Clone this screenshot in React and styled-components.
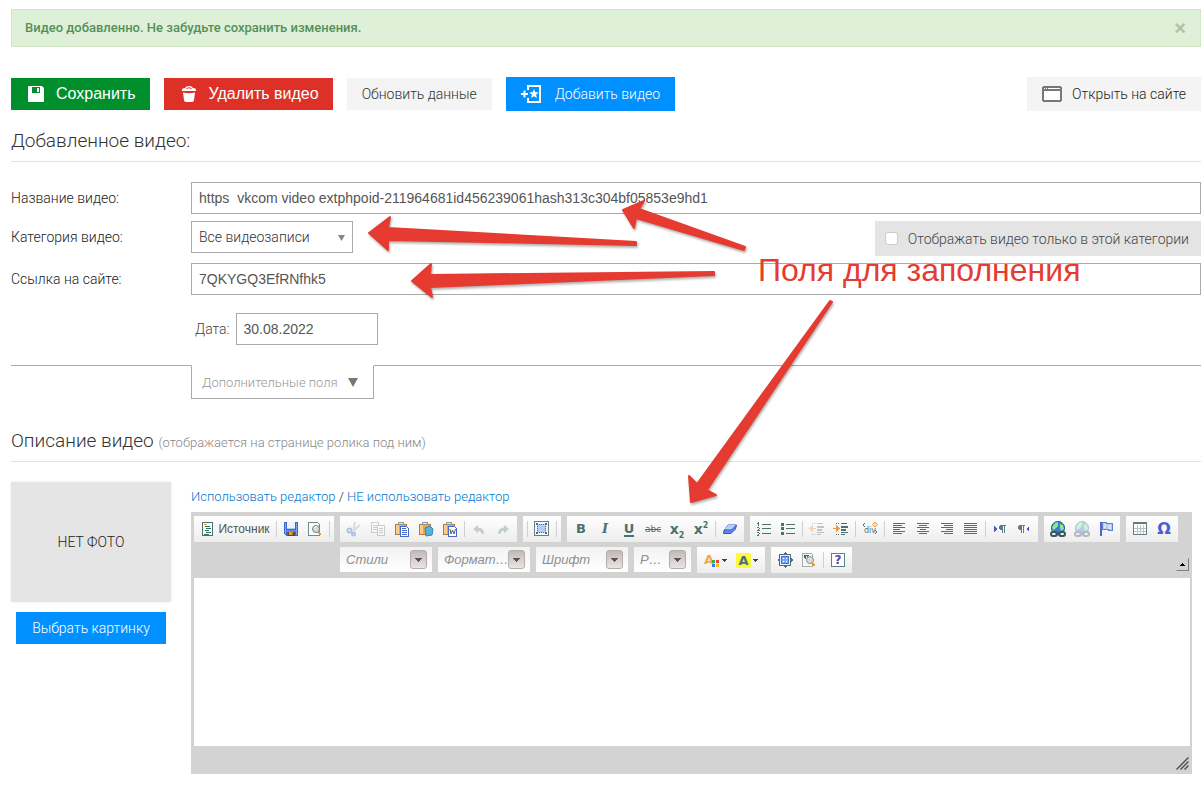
import React from 'react';
import styled, { createGlobalStyle } from 'styled-components';

const teal = '#4d7170';
const blue = '#4a6fd8';

function App() {
  return (
    <>
      <GlobalStyle />
      <Page>
        <Alert role="status">
          <AlertText>Видео добавленно. Не забудьте сохранить изменения.</AlertText>
          <CloseButton type="button" aria-label="Закрыть">×</CloseButton>
        </Alert>

        <Actions>
          <ActionButton type="button" $bg="#008f2c" $color="#fff" $plain>
            <SaveIcon />
            Сохранить
          </ActionButton>
          <ActionButton type="button" $bg="#dd3127" $color="#fff" $plain>
            <TrashIcon />
            Удалить видео
          </ActionButton>
          <ActionButton type="button" $bg="#f4f4f4" $color="#333">
            Обновить данные
          </ActionButton>
          <ActionButton type="button" $bg="#0090ff" $color="#fff" $tall $gap={14}>
            <AddVideoIcon />
            Добавить видео
          </ActionButton>
          <Spacer />
          <ActionButton type="button" $bg="#f4f4f4" $color="#222" $tall>
            <WindowIcon />
            Открыть на сайте
          </ActionButton>
        </Actions>

        <SectionTitle $top={10}>Добавленное видео:</SectionTitle>

        <Form>
          <Label htmlFor="title">Название видео:</Label>
          <TextInput
            id="title"
            defaultValue="https  vkcom video extphpoid-211964681id456239061hash313c304bf05853e9hd1"
          />

          <Label htmlFor="category">Категория видео:</Label>
          <CategoryRow>
            <SelectBox>
              <CategorySelect id="category">
                <option>Все видеозаписи</option>
              </CategorySelect>
              <SelectArrow viewBox="0 0 7 6"><path d="M0 0h7L3.5 6z" fill="#888" /></SelectArrow>
            </SelectBox>
            <OnlyHere>
              <Checkbox type="checkbox" />
              Отображать видео только в этой категории
            </OnlyHere>
          </CategoryRow>

          <Label htmlFor="link">Ссылка на сайте:</Label>
          <TextInput id="link" defaultValue="7QKYGQ3EfRNfhk5" />
        </Form>

        <DateRow>
          <DateLabel htmlFor="date">Дата:</DateLabel>
          <DateInput id="date" defaultValue="30.08.2022" />
        </DateRow>

        <Extra>
          <ExtraTab type="button">
            Дополнительные поля
            <svg width="10" height="9" viewBox="0 0 10 9"><path d="M0 0h10L5 9z" fill="#777" /></svg>
          </ExtraTab>
        </Extra>

        <SectionTitle $top={22}>
          Описание видео <Hint>(отображается на странице ролика под ним)</Hint>
        </SectionTitle>

        <Description>
          <PhotoColumn>
            <Photo>НЕТ ФОТО</Photo>
            <PickButton type="button">Выбрать картинку</PickButton>
          </PhotoColumn>
          <EditorColumn>
            <Modes>
              <a href="#on">Использовать редактор</a> / <a href="#off">НЕ использовать редактор</a>
            </Modes>
            <Editor />
          </EditorColumn>
        </Description>

        <Notes />
      </Page>
    </>
  );
}

export default App;

function Editor() {
  return (
    <EditorFrame>
      <Toolbar>
        <Group>
          <SourceButton type="button">
            <SourceIcon />
            Источник
          </SourceButton>
          <Separator />
          <Tool label="Сохранить"><DiskIcon /></Tool>
          <Tool label="Предварительный просмотр"><PreviewIcon /></Tool>
          <Separator />
        </Group>

        <ToolRows>
          <ToolRow>
            <Group>
              <Tool label="Вырезать" off><CutIcon /></Tool>
              <Tool label="Копировать" off><CopyIcon /></Tool>
              <Tool label="Вставить"><PasteIcon kind="plain" /></Tool>
              <Tool label="Вставить только текст"><PasteIcon kind="text" /></Tool>
              <Tool label="Вставить из Word"><PasteIcon kind="word" /></Tool>
              <Separator />
              <Tool label="Отменить"><UndoIcon /></Tool>
              <Tool label="Повторить"><UndoIcon flip /></Tool>
            </Group>
            <Group>
              <Separator />
              <Tool label="Выделить все"><SelectAllIcon /></Tool>
              <Separator />
            </Group>
            <Group>
              <Tool label="Полужирный"><Letter $size={13}>B</Letter></Tool>
              <Tool label="Курсив"><Letter $size={13} $serif>I</Letter></Tool>
              <Tool label="Подчеркнутый"><Letter $size={13} $under>U</Letter></Tool>
              <Tool label="Зачеркнутый"><Letter $size={9} $strike>abc</Letter></Tool>
              <Tool label="Подстрочный"><Letter $size={14}>x<sub>2</sub></Letter></Tool>
              <Tool label="Надстрочный"><Letter $size={14}>x<sup>2</sup></Letter></Tool>
              <Separator />
              <Tool label="Убрать форматирование"><EraserIcon /></Tool>
            </Group>
            <Group>
              <Tool label="Нумерованный список"><ListIcon numbered /></Tool>
              <Tool label="Маркированный список"><ListIcon /></Tool>
              <Separator />
              <Tool label="Уменьшить отступ" off><IndentIcon out /></Tool>
              <Tool label="Увеличить отступ"><IndentIcon /></Tool>
              <Separator />
              <Tool label="Контейнер div"><DivIcon /></Tool>
              <Separator />
              <Tool label="По левому краю"><AlignIcon kind="left" /></Tool>
              <Tool label="По центру"><AlignIcon kind="center" /></Tool>
              <Tool label="По правому краю"><AlignIcon kind="right" /></Tool>
              <Tool label="По ширине"><AlignIcon kind="full" /></Tool>
              <Separator />
              <Tool label="Слева направо"><DirectionIcon /></Tool>
              <Tool label="Справа налево"><DirectionIcon rtl /></Tool>
            </Group>
            <Group>
              <Tool label="Ссылка"><GlobeIcon /></Tool>
              <Tool label="Убрать ссылку" off><GlobeIcon /></Tool>
              <Tool label="Якорь"><FlagIcon /></Tool>
            </Group>
            <Group>
              <Tool label="Таблица"><TableIcon /></Tool>
              <Tool label="Специальный символ"><Omega>Ω</Omega></Tool>
            </Group>
          </ToolRow>

          <ToolRow>
            <Combo label="Стили" text="Стили" width={92} />
            <Combo label="Формат" text="Формат…" width={92} />
            <Combo label="Шрифт" text="Шрифт" width={92} />
            <Combo label="Размер" text="Р…" width={57} />
            <Group>
              <WideTool type="button" aria-label="Цвет текста">
                <TextColorIcon />
                <MenuArrow />
              </WideTool>
              <WideTool type="button" aria-label="Цвет фона">
                <Marker>A</Marker>
                <MenuArrow />
              </WideTool>
            </Group>
            <Group>
              <Tool label="Развернуть"><MaximizeIcon /></Tool>
              <Tool label="Отображать блоки"><BlocksIcon /></Tool>
              <Separator />
              <Tool label="О программе"><HelpBox>?</HelpBox></Tool>
            </Group>
          </ToolRow>
        </ToolRows>

        <Collapse type="button" aria-label="Свернуть панель">
          <svg width="5" height="3" viewBox="0 0 5 3" shapeRendering="crispEdges">
            <path d="M2 0h1v1h1v1h1v1H0V2h1V1h1z" fill="#000" />
          </svg>
        </Collapse>
      </Toolbar>
      <EditArea aria-label="Описание видео" />
      <EditorFooter>
        <svg width="13" height="13" viewBox="0 0 13 13">
          <path d="M.5 12.5l12-12M4.500 12.500l8-8M8.500 12.500l4-4" stroke="#555" strokeWidth="1.500" />
        </svg>
      </EditorFooter>
    </EditorFrame>
  );
}

function Tool({ label, off, children }) {
  return (
    <ToolButton type="button" aria-label={label} $off={off}>
      {children}
    </ToolButton>
  );
}

function Combo({ label, text, width }) {
  return (
    <ComboBox $width={width}>
      <ComboSelect aria-label={label}>
        <option>{text}</option>
      </ComboSelect>
      <ComboArrow>
        <svg width="7" height="4" viewBox="0 0 7 4" shapeRendering="crispEdges">
          <path d="M0 0h7v1H6v1H5v1H4v1H3V3H2V2H1V1H0z" fill="#555" />
        </svg>
      </ComboArrow>
    </ComboBox>
  );
}

/* red notes over the form */
function Notes() {
  const arrows = [
    'M623 210L644 201L639 209L745 247L744 250L636 218L634 228Z',
    'M369 233L390 217L388 228L636 242L636 245L388 240L388 250Z',
    'M412 281L431 264L430 275L714 272L714 275L430 287L432 297Z',
    'M691 502L689 476L697 484L830 301L832 302L707 490L716 495Z',
  ];
  return (
    <>
      <ArrowLayer width="1204" height="520" viewBox="0 0 1204 520" aria-hidden="true">
        {arrows.map((d) => (
          <path key={d} d={d} fill="#e53b30" stroke="#e53b30" strokeWidth="2" strokeLinejoin="round" />
        ))}
      </ArrowLayer>
      <NoteText>Поля для заполнения</NoteText>
    </>
  );
}

/* icons of the action buttons */

const SaveIcon = () => (
  <svg width="20" height="20" viewBox="0 0 20 20">
    <path d="M3 2h13l2 2v13q0 1-1 1H3q-1 0-1-1V3q0-1 1-1z" fill="#fff" />
    <path d="M6 3h8v6H6z" fill="#008f2c" />
    <path d="M11 4h2v4h-2z" fill="#fff" />
  </svg>
);

const TrashIcon = () => (
  <svg width="20" height="20" viewBox="0 0 20 20">
    <path d="M3 6q0-2 3-2 1-2 4-2t4 2q3 0 3 2v1H3z" fill="#fff" />
    <path d="M7.500 4.500q2.500-1.500 5 0" fill="none" stroke="#dd3127" />
    <path d="M4 8.500q6 1.500 12 0l-1 7.500q0 2-2 2H7q-2 0-2-2z" fill="#fff" />
  </svg>
);

const AddVideoIcon = () => (
  <svg width="20" height="20" viewBox="0 0 20 20">
    <path d="M7 6V2h12v16H7v-4M0 10h7M3.500 6.500v7" fill="none" stroke="#fff" strokeWidth="2" />
    <path d="M13 5l1.300 3.200 3.400.3-2.600 2.200.8 3.300-2.900-1.800-2.900 1.800.8-3.300-2.600-2.200 3.400-.3z" fill="#fff" />
  </svg>
);

const WindowIcon = () => (
  <svg width="20" height="16" viewBox="0 0 20 16" shapeRendering="crispEdges">
    <path d="M1 0h18v1h1v14h-1v1H1v-1H0V1h1z" fill="#777" />
    <path d="M2 5h16v9H2zM6 2h12v1H6zM2 2h1v1H2zM4 2h1v1H4z" fill="#fff" />
  </svg>
);

/* 16px toolbar icons */

const Icon = ({ children, ...rest }) => (
  <svg width="16" height="16" viewBox="0 0 16 16" shapeRendering="crispEdges" {...rest}>
    {children}
  </svg>
);

const SourceIcon = () => (
  <Icon>
    <path d="M2.500 1.500h10v13h-10z" fill="#f7f9f7" stroke={teal} />
    <path d="M4 3h3v1H4z" fill="#f0a030" />
    <path d="M5 5h5v1H5zM6 7h5v1H6zM5 9h4v1H5zM6 11h5v1H6zM4 13h5v1H4z" fill="#2f6f60" />
  </Icon>
);

const DiskIcon = () => (
  <Icon>
    <path d="M1 1h14v14H3l-2-2z" fill="#3a66d0" />
    <path d="M2 2h1v11H2zM13 2h1v12h-1z" fill="#7fa4f0" />
    <path d="M3 9h10v2H3z" fill="#5f8be6" />
    <path d="M4 1h8v7H4z" fill="#eef3fb" />
    <path d="M4 7h8v1H4z" fill="#b8c8e8" />
    <path d="M5 11h7v4H5z" fill="#4b4b55" />
    <path d="M6 11h2v3H6z" fill="#e9a13a" />
    <path d="M8 11h2v3H8z" fill="#c98734" />
  </Icon>
);

const PreviewIcon = () => (
  <Icon>
    <path d="M1.500 1.500h9l2 2v11h-11z" fill="#fbfcfb" stroke="#6f8b84" />
    <circle cx="9" cy="8" r="3.500" fill="#d4dcdc" stroke="#6f7f80" shapeRendering="auto" />
    <path d="M7 7q1-2 3-1" stroke="#fff" fill="none" />
    <path d="M11 11l3 3" stroke="#e59a36" strokeWidth="2" />
  </Icon>
);

const CutIcon = () => (
  <Icon shapeRendering="auto">
    <path d="M9 1L7.500 8M14 4L7 10" stroke="#9aa9b0" strokeWidth="2" fill="none" />
    <circle cx="3.500" cy="9.500" r="2" fill="none" stroke="#3f62cc" strokeWidth="2" />
    <circle cx="7.500" cy="13" r="1.500" fill="none" stroke="#3f62cc" strokeWidth="2" />
  </Icon>
);

const CopyIcon = () => (
  <Icon>
    <path d="M1.500 1.500h7v10h-7z" fill="#fff" stroke="#6c8c84" />
    <path d="M3 4h4v1H3zM3 6h4v1H3zM3 8h4v1H3z" fill="#6c8c84" />
    <path d="M7.500 4.500h7v10h-7z" fill="#fff" stroke="#6c8c84" />
    <path d="M9 7h4v1H9zM9 9h4v1H9zM9 11h4v1H9z" fill="#6c8c84" />
  </Icon>
);

const PasteIcon = ({ kind }) => (
  <Icon>
    <path d="M1 3h12v11H1z" fill="#c2762d" />
    <path d="M2 4h10v9H2z" fill="#eea850" />
    <path d="M2 4h3v9H2z" fill="#f9cd88" />
    <path d="M4 1h6v3H4z" fill="#8e979b" />
    <path d="M5 2h4v1H5z" fill="#e3e8ea" />
    {kind === 'text' && (
      <path d="M7 7l5-2 3 3-1 6-6 1z" fill="#55b4dc" stroke="#3385b2" shapeRendering="auto" />
    )}
    {kind !== 'text' && (
      <path d="M6.500 5.500h6l2 2v8h-8z" fill="#fff" stroke="#4668c8" />
    )}
    {kind === 'plain' && <path d="M8 7h4v1H8zM8 9h5v1H8zM8 11h5v1H8zM8 13h5v1H8z" fill="#4668c8" />}
    {kind === 'word' && (
      <path d="M8 8l1 5 1.500-4 1.500 4 1.500-5" fill="none" stroke="#55636a" shapeRendering="auto" />
    )}
  </Icon>
);

const UndoIcon = ({ flip }) => (
  <Icon shapeRendering="auto">
    <g transform={flip ? 'matrix(-1 0 0 1 16 0)' : undefined}>
      <path d="M2 8l5-4v2.500q6 0 6 6.500H10.500q0-3-3.500-3v2.500z" fill="#c3cecd" />
    </g>
  </Icon>
);

const SelectAllIcon = () => (
  <Icon>
    <path d="M.5.5h14v14H.5z" fill="#f7fafa" stroke="#628080" />
    <path d="M3 3h9v9H3z" fill="#b4cdf4" />
    <path d="M2 2h2v2H2zM11 2h2v2h-2zM2 11h2v2H2zM11 11h2v2h-2z" fill={teal} />
    <path d="M5 3h1v1H5zM7 3h1v1H7zM9 3h1v1H9zM5 11h1v1H5zM7 11h1v1H7zM9 11h1v1H9zM3 5h1v1H3zM3 7h1v1H3zM3 9h1v1H3zM11 5h1v1h-1zM11 7h1v1h-1zM11 9h1v1h-1z" fill={teal} />
  </Icon>
);

const EraserIcon = () => (
  <Icon shapeRendering="auto">
    <path d="M6 4h8.500l-1 4-4.500 4.500H1.500l.5-3z" fill="#5d8ae6" stroke="#3556b8" strokeLinejoin="round" />
    <path d="M6 4h8.500L9.500 9H2z" fill="#b4cffa" />
    <path d="M2 9h7.500L14.500 4" fill="none" stroke="#3556b8" />
  </Icon>
);

const ListIcon = ({ numbered }) => (
  <Icon>
    <path d="M6 3h9v1H6zM6 7h9v1H6zM6 12h9v1H6z" fill={teal} />
    {numbered ? (
      <path d="M2 1h1v4H2zM1 2h1v1H1zM1 6h2v1H1zM3 7h1v1H3zM2 8h1v1H2zM1 9h3v1H1zM1 11h2v1H1zM3 12h1v1H3zM2 13h1v1H2zM1 14h2v1H1z" fill={teal} />
    ) : (
      <path d="M1 2h3v3H1zM1 6h3v3H1zM1 11h3v3H1z" fill={teal} />
    )}
  </Icon>
);

const IndentIcon = ({ out }) => (
  <Icon>
    <path d="M3 2h1v1H3zM5 2h1v1H5zM8 2h6v1H8zM8 5h7v2H8zM8 8h5v2H8zM8 11h7v1H8zM3 13h1v1H3zM5 13h1v1H5zM8 13h4v1H8z" fill={teal} />
    <path d={out ? 'M0 7.500L4 4v3h3v1H4v3z' : 'M7 7.500L3 4v3H0v1h3v3z'} fill="#f09a35" />
  </Icon>
);

const DivIcon = () => (
  <Icon shapeRendering="auto">
    <path d="M3 2L1 4l2 2M13 9l2 2-2 2" fill="none" stroke={teal} />
    <TinyText x="2" y="12">div</TinyText>
    <path d="M13 1l2.500 2.500L13 6l-2.500-2.500z" fill="#ffe9a8" stroke="#f09a35" />
  </Icon>
);

const alignRows = {
  left: [[2, 12], [2, 9], [2, 12], [2, 7], [2, 12], [2, 9]],
  center: [[2, 12], [4, 8], [2, 12], [5, 6], [2, 12], [4, 8]],
  right: [[2, 12], [5, 9], [2, 12], [7, 7], [2, 12], [5, 9]],
  full: [[1, 13], [1, 13], [1, 13], [1, 13], [1, 13], [1, 13]],
};

const AlignIcon = ({ kind }) => (
  <Icon>
    {alignRows[kind].map(([x, w], i) => (
      <rect key={i} x={x} y={2 + i * 2} width={w} height="1" fill={teal} />
    ))}
  </Icon>
);

const DirectionIcon = ({ rtl }) => (
  <Icon>
    <g transform={rtl ? 'translate(-5 0)' : undefined}>
      <path d="M8 4h6v1h-1v7h-1V5h-1v7h-1V9H8V8H7V5h1z" fill="#5f8080" />
    </g>
    <path d={rtl ? 'M10 8l3-3v6z' : 'M5 8L2 5v6z'} fill="#5650c0" />
  </Icon>
);

const GlobeIcon = () => (
  <Icon shapeRendering="auto">
    <circle cx="8" cy="7" r="6.500" fill="#3f7be0" stroke="#2c539c" />
    <path d="M5 2l3-1v4L5 8 3 9 2 6zM10 3l3 1 1 4-3 2-1-3z" fill="#82f07c" />
    <rect x="1" y="11" width="6" height="4" rx="2" fill="#eef2f2" stroke="#3c5656" strokeWidth="2" />
    <rect x="9" y="11" width="6" height="4" rx="2" fill="#eef2f2" stroke="#3c5656" strokeWidth="2" />
    <path d="M5 13h6" stroke="#3c5656" />
  </Icon>
);

const FlagIcon = () => (
  <Icon>
    <path d="M2 1h2v14H2z" fill="#5b62c8" />
    <path d="M4.500 1.500h4v1h6v7h-4v-1h-6z" fill="#bccdf0" stroke="#5a80dc" />
    <path d="M6 3h2v4H6zM10 4h3v4h-3z" fill="#dde2e4" />
  </Icon>
);

const TableIcon = () => (
  <Icon>
    <path d="M1.500 1.500h13v12h-13z" fill="#fff" stroke="#628080" />
    <path d="M2 2h12v1H2z" fill="#4a6fd8" />
    <path d="M2 7.500h12M2 10.500h12M5.500 4v9M8.500 4v9M11.500 4v9" stroke="#b9c6c6" />
  </Icon>
);

const TextColorIcon = () => (
  <Icon>
    <ColorLetter x="0" y="12">A</ColorLetter>
    <path d="M8 8h3v3H8z" fill="#3fae49" />
    <path d="M12 8h3v3h-3z" fill="#ee4438" />
    <path d="M8 12h3v3H8z" fill="#3c78e8" />
    <path d="M12 12h3v3h-3z" fill="#f3c22d" />
  </Icon>
);

const MaximizeIcon = () => (
  <Icon>
    <path d="M8 0l2 2H6zM8 16l2-2H6zM0 8l2-2v4zM16 8l-2-2v4z" fill={teal} />
    <path d="M2.500 2.500h11v11h-11z" fill="#e9f1fb" stroke={teal} />
    <path d="M4.500 4.500h7v7h-7z" fill="#79a8f4" stroke={blue} />
    <path d="M6 6h1v1H6zM9 6h1v1H9zM6 9h1v1H6zM9 9h1v1H9z" fill="#fff" />
  </Icon>
);

const BlocksIcon = () => (
  <Icon>
    <path d="M1.500 1.500h9l1 1v12h-10z" fill="#f4f6f5" stroke="#a4b1ae" />
    <path d="M3 3h5v1H7v3H6V4H5v3H4V6H3z" fill="#3f6b63" />
    <circle cx="9" cy="8" r="3.500" fill="#d7dcdf" stroke="#85929a" shapeRendering="auto" />
    <path d="M11 11l3 3" stroke="#e59a36" strokeWidth="2" />
  </Icon>
);

const MenuArrow = () => (
  <svg width="5" height="3" viewBox="0 0 5 3" shapeRendering="crispEdges">
    <path d="M0 0h5v1H4v1H3v1H2V2H1V1H0z" fill="#444" />
  </svg>
);

const GlobalStyle = createGlobalStyle`
  * {
    box-sizing: border-box;
  }

  body {
    margin: 0;
    background: #fff;
    font-family: Roboto, "Liberation Sans", sans-serif;
    font-weight: 300;
    font-size: 14px;
    color: #222;
  }

  button, input, select, textarea {
    font: inherit;
    margin: 0;
    border-radius: 0;
  }

  svg {
    display: block;
    flex: none;
  }
`;

const Page = styled.main`
  position: relative;
  padding: 9px 3px 11px 11px;
`;

const Alert = styled.div`
  display: flex;
  justify-content: space-between;
  height: 38px;
  padding: 0 14px 0 13px;
  background: #dff0d8;
  border: 1px solid #d2e8c5;
`;

const AlertText = styled.span`
  line-height: 36px;
  font-size: 13px;
  font-weight: 500;
  color: #54905a;
`;

const CloseButton = styled.button`
  padding: 0;
  border: none;
  background: none;
  color: #b0c0ab;
  font: bold 20px/32px "Liberation Sans", sans-serif;
`;

const Actions = styled.div`
  display: flex;
  align-items: center;
  gap: 14px;
  margin-top: 30px;
`;

const ActionButton = styled.button`
  display: flex;
  align-items: center;
  gap: ${({ $gap }) => $gap || 10}px;
  height: ${({ $tall }) => ($tall ? 34 : 32)}px;
  padding: 0 ${({ $plain }) => ($plain ? 14 : 15)}px 0 15px;
  border: none;
  background: ${({ $bg }) => $bg};
  color: ${({ $color }) => $color};
  font-family: ${({ $plain }) => ($plain ? '"Liberation Sans", sans-serif' : 'inherit')};
  font-weight: ${({ $plain }) => ($plain ? 400 : 300)};
  font-size: ${({ $plain }) => ($plain ? 16 : 14)}px;
  white-space: nowrap;
`;

const Spacer = styled.div`
  flex: 1;
`;

const SectionTitle = styled.h2`
  margin: ${({ $top }) => $top}px 0 20px;
  border-bottom: 1px solid #e2e2e2;
  font-size: 19px;
  font-weight: 300;
  line-height: 40px;
  color: #333;
`;

const Hint = styled.small`
  font-size: 13px;
  line-height: 1;
  color: #888;
`;

const Form = styled.div`
  display: grid;
  grid-template-columns: 180px 1fr;
  row-gap: 7px;
`;

const Label = styled.label`
  line-height: 32px;
`;

const TextInput = styled.input`
  width: 100%;
  height: 32px;
  padding: 0 7px;
  border: 1px solid #aaa;
  background: #fff;
  color: #555;
  font-family: "Liberation Sans", sans-serif;
  font-weight: 400;
`;

const CategoryRow = styled.div`
  display: flex;
  justify-content: space-between;
  align-items: flex-start;
`;

const SelectBox = styled.div`
  position: relative;
  width: 162px;
`;

const CategorySelect = styled.select`
  display: block;
  width: 100%;
  height: 32px;
  padding: 0 7px;
  appearance: none;
  border: 1px solid #aaa;
  background: #fff;
  color: #333;
`;

const SelectArrow = styled.svg`
  position: absolute;
  top: 14px;
  right: 8px;
  width: 7px;
  height: 6px;
  pointer-events: none;
`;

const OnlyHere = styled.label`
  display: flex;
  align-items: center;
  gap: 10px;
  height: 35px;
  padding: 0 12px 0 10px;
  background: #e4e4e4;
  color: #444;
`;

const Checkbox = styled.input`
  width: 13px;
  height: 13px;
  appearance: none;
  border: 1px solid #ccc;
  border-radius: 3px;
  background: #fff;
`;

const DateRow = styled.div`
  display: flex;
  align-items: center;
  gap: 6px;
  margin-top: 18px;
  padding-left: 184px;
`;

const DateLabel = styled.label`
  color: #444;
`;

const DateInput = styled(TextInput)`
  width: 142px;
`;

const Extra = styled.div`
  margin-top: 20px;
  padding-left: 180px;
  border-top: 1px solid #aaa;
`;

const ExtraTab = styled.button`
  display: flex;
  align-items: center;
  gap: 10px;
  height: 34px;
  margin-top: -1px;
  padding: 0 15px 0 10px;
  border: 1px solid #aaa;
  border-top-color: #fff;
  background: #fff;
  color: #999;
  font-size: 13px;
`;

const Description = styled.div`
  display: flex;
  gap: 20px;
`;

const PhotoColumn = styled.div`
  flex: none;
  display: flex;
  flex-direction: column;
  align-items: center;
  gap: 10px;
  width: 160px;
`;

const Photo = styled.div`
  width: 100%;
  height: 120px;
  background: #e5e5e5;
  box-shadow: 0 0 3px rgba(0, 0, 0, 0.08);
  line-height: 120px;
  text-align: center;
`;

const PickButton = styled.button`
  height: 32px;
  padding: 0 16px;
  border: none;
  background: #0090ff;
  color: #fff;
  white-space: nowrap;
`;

const EditorColumn = styled.div`
  flex: 1;
  min-width: 0;
  margin-right: 9px;
`;

const Modes = styled.div`
  font-size: 13px;
  line-height: 30px;

  a {
    color: #0078d4;
    text-decoration: none;
  }
`;

const EditorFrame = styled.div`
  background: #d3d3d3;
  padding: 0 2px 0 3px;
`;

const Toolbar = styled.div`
  display: flex;
  align-items: flex-start;
  gap: 6px;
  padding: 4px 1px 5px 0;
`;

const ToolRows = styled.div`
  flex: 1;
  min-width: 0;
  display: flex;
  flex-direction: column;
  gap: 5px;
`;

const ToolRow = styled.div`
  display: flex;
  gap: 6px;
`;

const Group = styled.div`
  flex: none;
  display: flex;
  align-items: center;
  height: 26px;
  padding: 0 2px;
  background: linear-gradient(#fff, #ededed);
`;

const Separator = styled.span`
  width: 1px;
  height: 16px;
  margin: 0 2px;
  background: #d0d0d0;
`;

const ToolButton = styled.button`
  display: flex;
  align-items: center;
  justify-content: center;
  width: 24px;
  height: 26px;
  padding: 0;
  border: none;
  background: none;
  opacity: ${({ $off }) => ($off ? 0.35 : 1)};
`;

const WideTool = styled(ToolButton)`
  width: 32px;
  gap: 2px;
`;

const SourceButton = styled(ToolButton)`
  width: 78px;
  gap: 2px;
  color: #555;
  font-family: "Liberation Sans", sans-serif;
  font-size: 12px;
  font-weight: 400;
`;

const Letter = styled.span`
  font-family: ${({ $serif }) => ($serif ? '"DejaVu Serif", serif' : '"DejaVu Sans", sans-serif')};
  font-style: ${({ $serif }) => ($serif ? 'italic' : 'normal')};
  font-weight: ${({ $strike }) => ($strike ? 400 : 700)};
  font-size: ${({ $size }) => $size}px;
  line-height: ${({ $under }) => ($under ? 13 : 16)}px;
  color: ${teal};
  border-bottom: ${({ $under }) => ($under ? `2px solid ${teal}` : 'none')};
  text-decoration: ${({ $strike }) => ($strike ? 'line-through' : 'none')};

  sub, sup {
    font-size: 8px;
    line-height: 0;
  }
`;

const Omega = styled.span`
  font: bold 16px/16px "DejaVu Sans", sans-serif;
  color: #4a5fd0;
`;

const Marker = styled.span`
  width: 15px;
  height: 15px;
  background: #fdf93c;
  color: ${teal};
  font: bold 13px/15px "DejaVu Sans", sans-serif;
  text-align: center;
`;

const HelpBox = styled.span`
  width: 14px;
  height: 14px;
  border: 1px solid #628080;
  background: #fff;
  color: #4b4bb4;
  font: bold 12px/12px "DejaVu Sans", sans-serif;
  text-align: center;
`;

const TinyText = styled.text`
  font: 8px "DejaVu Sans", sans-serif;
  fill: ${teal};
`;

const ColorLetter = styled.text`
  font: bold 13px "DejaVu Sans", sans-serif;
  fill: #f2a950;
`;

const ComboBox = styled.div`
  position: relative;
  flex: none;
  width: ${({ $width }) => $width}px;
  height: 25px;
  background: linear-gradient(#f2f2f2, #fff);
`;

const ComboSelect = styled.select`
  width: 100%;
  height: 25px;
  padding: 0 20px 0 6px;
  appearance: none;
  border: none;
  background: none;
  color: #8f8f8f;
  font: italic 13px "Liberation Sans", sans-serif;
`;

const ComboArrow = styled.span`
  position: absolute;
  top: 3px;
  right: 5px;
  display: flex;
  align-items: center;
  justify-content: center;
  width: 17px;
  height: 19px;
  border: 1px solid #b5acac;
  border-radius: 3px;
  background: linear-gradient(#c3b8b8, #ebe4e4);
  pointer-events: none;
`;

const Collapse = styled.button`
  display: flex;
  align-items: center;
  justify-content: center;
  align-self: flex-end;
  flex: none;
  width: 13px;
  height: 13px;
  margin-bottom: 2px;
  padding: 0;
  border: 1px solid;
  border-color: #d3d3d3 #808080 #808080 #d3d3d3;
  background: none;
`;

const EditArea = styled.textarea`
  display: block;
  width: 100%;
  height: 168px;
  border: none;
  resize: none;
  background: #fff;
`;

const EditorFooter = styled.div`
  display: flex;
  align-items: flex-end;
  justify-content: flex-end;
  height: 28px;
  padding: 0 1px 4px 0;
`;

const ArrowLayer = styled.svg`
  position: absolute;
  top: 0;
  left: 0;
  filter: drop-shadow(1px 2px 1px rgba(0, 0, 0, 0.3));
  pointer-events: none;
`;

const NoteText = styled.div`
  position: absolute;
  top: 250px;
  left: 758px;
  color: #e53b30;
  font: 32px/40px "Liberation Sans", sans-serif;
  white-space: nowrap;
  pointer-events: none;
`;
